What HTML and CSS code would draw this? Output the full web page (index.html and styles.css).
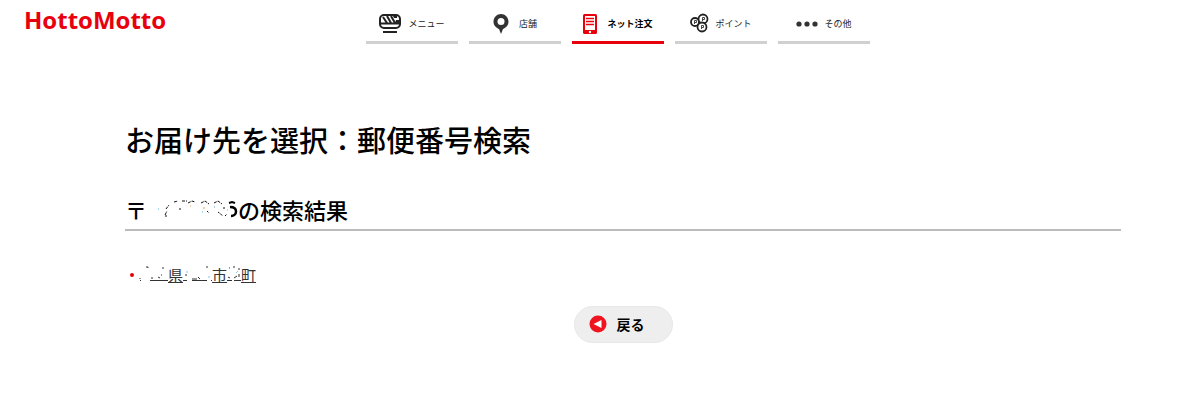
FILE: index.html
```html
<!DOCTYPE html>
<html lang="ja">
<head>
    <meta charset="UTF-8">
    <meta name="viewport" content="width=device-width, initial-scale=1.0">
    <title>お届け先を選択</title>
    <link rel="stylesheet" href="styles.css">
</head>
<body>
    <header class="header">
        <a class="logo" href="#">HottoMotto</a>
        <nav class="nav">
            <a class="navItem" href="#">
                <svg width="23" height="22" viewBox="0 0 23 22" aria-hidden="true">
                    <rect x="1" y="2" width="20" height="13" rx="4" fill="#fff" stroke="#222" stroke-width="2"/>
                    <path d="M2 10.5h18M4 4l4 6M8 3l4 7M12 3l4 7" fill="none" stroke="#222" stroke-width="2"/>
                    <path d="M14 3h4v2h-3zM17 7h3v3h-4z" fill="#222"/>
                    <path d="M4 19h14" stroke="#222" stroke-width="2"/>
                </svg>
                <span>メニュー</span>
            </a>
            <a class="navItem" href="#">
                <svg class="pin" width="16" height="22" viewBox="0 0 16 22" aria-hidden="true">
                    <path d="M8 1C4 1 .5 4.5.5 8.5c0 4 2.5 6 5.500 7.500l2 5 2-5c3-1.500 5.500-3.500 5.500-7.500C15.500 4.500 12 1 8 1z" fill="#333"/>
                    <circle cx="8" cy="8.500" r="3.500" fill="#fff"/>
                </svg>
                <span>店舗</span>
            </a>
            <a class="navItem active" href="#">
                <svg class="phone" width="14" height="22" viewBox="0 0 14 22" aria-hidden="true">
                    <rect x="0" y="1" width="14" height="20" rx="1.5" fill="#e8000d"/>
                    <rect x="2" y="3" width="10" height="14" fill="#fff"/>
                    <path d="M3 5.500h8M3 8.500h8M3 11.500h8" stroke="#e8000d" stroke-width="1.500"/>
                    <circle cx="7" cy="19" r="1.200" fill="#fff"/>
                </svg>
                <span>ネット注文</span>
            </a>
            <a class="navItem" href="#">
                <svg width="19" height="22" viewBox="0 0 19 22" aria-hidden="true">
                    <g fill="#fff" stroke="#222" stroke-width="1.800">
                        <circle cx="5" cy="9" r="4"/>
                        <circle cx="13" cy="6" r="4.500"/>
                        <circle cx="12" cy="14" r="4.500"/>
                    </g>
                    <path d="M4.500 11V7.500h2v2h-2M12.500 8V4.500h2v2h-2M11.500 16v-3.500h2v2h-2" fill="none" stroke="#444"/>
                </svg>
                <span>ポイント</span>
            </a>
            <a class="navItem" href="#">
                <svg width="22" height="22" viewBox="0 0 22 22" aria-hidden="true">
                    <g fill="#333">
                        <circle cx="3" cy="11" r="2.600"/>
                        <circle cx="11" cy="11" r="2.600"/>
                        <circle cx="19" cy="11" r="2.600"/>
                    </g>
                </svg>
                <span>その他</span>
            </a>
        </nav>
    </header>

    <main class="main">
        <h1 class="title">お届け先を選択：郵便番号検索</h1>
        <h2 class="result">
            <span>〒</span>
            <!-- 消された番号の残り -->
            <svg class="maskedCode" width="91" height="24" viewBox="0 0 91 24" aria-hidden="true">
                <g fill="none" stroke="#111">
                    <path d="M18 18l2-4M19 12l3-4M27 5l4-1M35 4h5M41 6l4-2 3 1M54 6l4-2 4 3M67 6l4-2 4 3" stroke-dasharray="3 1"/>
                    <path d="M18 19h2M32 12h2M60 14l2 2M71 15l5 4M78 19l2-2M76 11h2" stroke-dasharray="2 1"/>
                </g>
                <path d="M11 12h1M67 10h1M55 15h1" stroke="#4bb1e8"/>
                <path d="M43 9h1M56 11h2M80 13h1" stroke="#e8a050"/>
                <path d="M82 6l3-1 3 1" fill="none" stroke="#000" stroke-width="2"/>
                <path d="M83 10c4 0 6 2 6 4.500s-2 4.500-5 4.500" fill="none" stroke="#000" stroke-width="2.500"/>
            </svg>
            <span>の検索結果</span>
        </h2>
        <ul class="list">
            <li>
                <a class="address" href="#">
                    <svg width="30" height="22" viewBox="0 0 30 22" aria-hidden="true">
                        <path d="M8 4h2v1M2 15v1M14 14v2M20 14l2 1M25 4v2M12 17.500h18M2 17.500h1M23 12h1" fill="none" stroke="#333"/>
                    </svg>
                    <span>県</span>
                    <svg width="29" height="22" viewBox="0 0 29 22" aria-hidden="true">
                        <path d="M3 11v2M9 16h5M15 14l2 2M23 4h2M0 17.500h4M9 17.500h15M28 17.500h1" fill="none" stroke="#333"/>
                        <path d="M4 8v2M26 13v2" stroke="#7fc4ed"/>
                    </svg>
                    <span>市</span>
                    <svg width="14" height="22" viewBox="0 0 14 22" aria-hidden="true">
                        <path d="M2 5h1M6 4h2M1 14l2 1M7 15l3-2M12 5v2M12 11v3M0 17.500h5M7 17.500h7" fill="none" stroke="#333"/>
                        <path d="M9 10l2-2" stroke="#7fc4ed"/>
                    </svg>
                    <span>町</span>
                </a>
            </li>
        </ul>
        <button class="back" type="button">
            <svg width="18" height="18" viewBox="0 0 18 18" aria-hidden="true">
                <circle cx="9" cy="9" r="8.500" fill="#ee1520"/>
                <path d="M12.500 5v8L4.500 9z" fill="#fff"/>
            </svg>
            <span>戻る</span>
        </button>
    </main>
</body>
</html>
```
FILE: styles.css
```css
body{
    margin: 0;
    background: #fff;
    color: #000;
    font-family: "Noto Sans CJK JP", sans-serif;
}
a{
    color: #222;
    text-decoration: none;
}
.header{
    display: grid;
    grid-template-columns: 342px 1fr;
    padding: 8px 24px;
}
.logo{
    color: #e8000d;
    font: bold 24px/24px "Open Sans", sans-serif;
}
.nav{
    display: flex;
    gap: 11px;
}
.navItem{
    display: flex;
    align-items: center;
    justify-content: center;
    gap: 6px;
    box-sizing: border-box;
    width: 92px;
    height: 36px;
    padding-bottom: 2px;
    border-bottom: 3px solid #d0d0d0;
    font-size: 9px;
    line-height: 16px;
}
.pin,.phone{
    margin-right: 4px;
}
.active{
    border-color: #e8000d;
    color: #000;
    font-weight: bold;
}
.main{
    padding: 67px 79px 72px 125px;
}
.title{
    margin: 0;
    font-size: 29px;
    font-weight: 500;
    line-height: 40px;
}
.result{
    display: flex;
    align-items: center;
    margin: 32px 0;
    padding-bottom: 2px;
    border-bottom: 2px solid #bbb;
    font-size: 22px;
    font-weight: 500;
    line-height: 36px;
}
.maskedCode{
    overflow: visible;
}
.list{
    margin: 0;
    padding: 0;
    list-style: none;
}
.list li{
    display: flex;
    align-items: center;
    gap: 4px;
    padding-left: 5px;
}
.list li::before{
    content: "";
    width: 4px;
    height: 4px;
    border-radius: 50%;
    background: #e8000d;
}
.address{
    display: flex;
    color: #333;
    font-size: 15px;
    line-height: 24px;
}
.address span{
    text-decoration: underline;
}
.back{
    display: flex;
    align-items: center;
    gap: 10px;
    margin: 19px auto 0;
    padding: 5px 27px 6px 14px;
    border: 1px solid #e8e8e8;
    border-radius: 20px;
    background: #eee;
    color: #000;
    font: bold 14px/24px "Noto Sans CJK JP", sans-serif;
    cursor: pointer;
}
```
